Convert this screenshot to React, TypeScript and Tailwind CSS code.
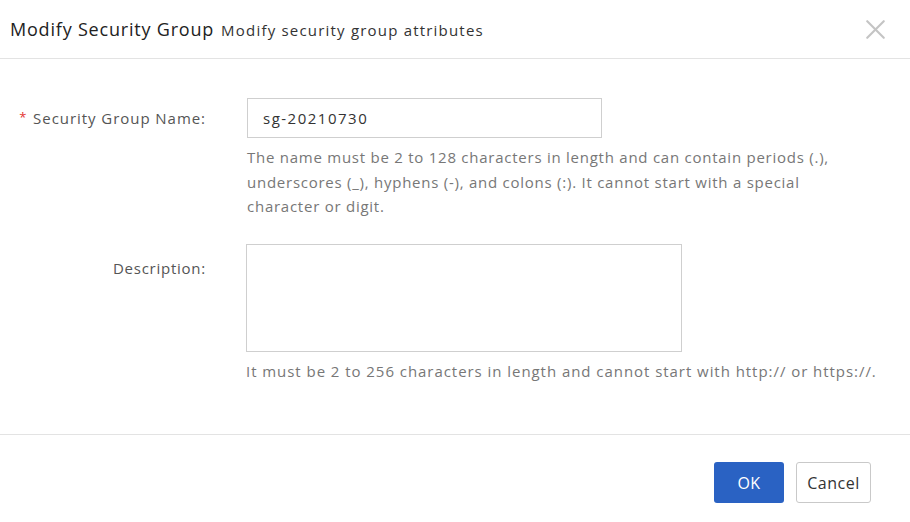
import { X } from 'lucide-react';

const App = () => {
    return (
        <div className="w-[910px] h-[522px] bg-white flex flex-col text-[#333] font-['Open_Sans',sans-serif]">
            {/* header */}
            <div className="h-[59px] flex items-center justify-between pl-[10px] pr-[18px] border-b border-[#e3e3e3]">
                <div className="flex items-baseline gap-[7px]">
                    <span className="text-[18px] font-medium text-[#222] tracking-[0.8px]">Modify Security Group</span>
                    <span className="text-[15px] text-[#333] tracking-[1.2px]">Modify security group attributes</span>
                </div>
                <X className="w-[33px] h-[33px] text-[#c4c4c4]" strokeWidth={1.6} />
            </div>

            {/* body */}
            <div className="flex-1 flex flex-col pt-[39px] gap-[25px] tracking-[0.75px]">
                <div className="flex">
                    <div className="w-[206px] shrink-0 h-[40px] flex items-center justify-end text-[15px] text-[#555]">
                        <span className="text-[#e3342f] mr-[6px] text-[13px]">*</span>
                        <span className="tracking-[0.95px]">Security Group Name:</span>
                    </div>
                    <div className="ml-[41px] flex flex-col">
                        <input
                            defaultValue="sg-20210730"
                            className="w-[355px] h-[40px] border border-[#cfcfcf] px-[15px] text-[15px] text-[#333] outline-none tracking-[1.5px]"
                        />
                        <p className="mt-[7px] w-[600px] text-[15px] leading-[24.5px] text-[#777]">
                            The name must be 2 to 128 characters in length and can contain periods (.), underscores (_), hyphens (-), and colons (:). It cannot start with a special character or digit.
                        </p>
                    </div>
                </div>

                <div className="flex">
                    <div className="w-[206px] shrink-0 pt-[13px] flex justify-end text-[15px] text-[#555]">
                        Description:
                    </div>
                    <div className="ml-[40px] flex flex-col">
                        <textarea className="w-[436px] h-[108px] border border-[#cfcfcf] resize-none outline-none" />
                        <p className="mt-[7px] whitespace-nowrap text-[15px] leading-[24.5px] text-[#777] tracking-[0.95px]">
                            It must be 2 to 256 characters in length and cannot start with http:// or https://.
                        </p>
                    </div>
                </div>
            </div>

            {/* footer */}
            <div className="h-[88px] border-t border-[#e3e3e3] flex items-start justify-end gap-[12px] pt-[27px] pr-[39px]">
                <button className="w-[70px] h-[41px] rounded-[3px] bg-[#2a62c3] text-white text-[16px] tracking-[0.5px]">OK</button>
                <button className="w-[75px] h-[41px] rounded-[3px] border border-[#c9c9c9] bg-white text-[#333] text-[16px] tracking-[0.5px]">Cancel</button>
            </div>
        </div>
    );
};

export default App;
